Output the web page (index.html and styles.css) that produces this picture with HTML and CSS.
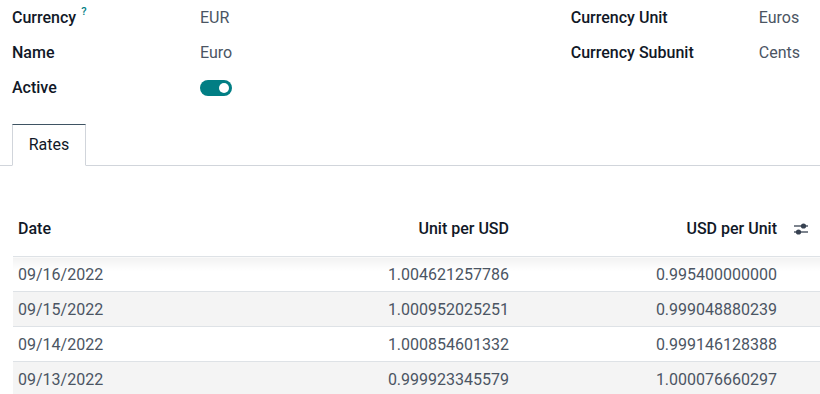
FILE: index.html
```html
<!DOCTYPE html>
<html lang="en">
<head>
  <meta charset="UTF-8" />
  <title>Currency</title>
  <link rel="stylesheet" href="styles.css">
</head>
<body>
  <div class="sheet">
    <div class="groups">
      <div class="group">
        <div class="field">
          <div class="label">Currency<sup class="help">?</sup></div>
          <div class="value">EUR</div>
        </div>
        <div class="field">
          <div class="label">Name</div>
          <div class="value">Euro</div>
        </div>
        <div class="field">
          <div class="label">Active</div>
          <div class="value"><span class="toggle"><span class="knob"></span></span></div>
        </div>
      </div>
      <div class="group group-right">
        <div class="field">
          <div class="label">Currency Unit</div>
          <div class="value">Euros</div>
        </div>
        <div class="field">
          <div class="label">Currency Subunit</div>
          <div class="value">Cents</div>
        </div>
      </div>
    </div>

    <ul class="tabs">
      <li class="tab active">Rates</li>
    </ul>

    <table class="rates">
      <thead>
        <tr>
          <th class="col-date">Date</th>
          <th class="num col-unit">Unit per USD</th>
          <th class="num col-usd">USD per Unit</th>
          <th class="col-opt">
            <svg width="16" height="14" viewBox="0 0 16 14">
              <line x1="1" y1="4" x2="15" y2="4" stroke="#374151" stroke-width="1.3"/>
              <line x1="1" y1="10" x2="15" y2="10" stroke="#374151" stroke-width="1.3"/>
              <circle cx="10.5" cy="4" r="2.6" fill="#374151"/>
              <circle cx="5.5" cy="10" r="2.6" fill="#374151"/>
            </svg>
          </th>
        </tr>
      </thead>
      <tbody>
        <tr class="first">
          <td>09/16/2022</td>
          <td class="num">1.004621257786</td>
          <td class="num">0.995400000000</td>
          <td></td>
        </tr>
        <tr>
          <td>09/15/2022</td>
          <td class="num">1.000952025251</td>
          <td class="num">0.999048880239</td>
          <td></td>
        </tr>
        <tr>
          <td>09/14/2022</td>
          <td class="num">1.000854601332</td>
          <td class="num">0.999146128388</td>
          <td></td>
        </tr>
        <tr>
          <td>09/13/2022</td>
          <td class="num">0.999923345579</td>
          <td class="num">1.000076660297</td>
          <td></td>
        </tr>
      </tbody>
    </table>
  </div>
</body>
</html>
```

FILE: styles.css
```css
body, html {
  margin: 0;
  padding: 0;
  background-color: #ffffff;
  font-family: Roboto, "Noto Sans", sans-serif;
  font-size: 16px;
  color: #374151;
}

.sheet {
  width: 820px;
}

.groups {
  display: flex;
  padding: 0 20px 0 12px;
}

.group {
  flex: 1;
  display: flex;
  flex-direction: column;
}

.group-right {
  flex: 0 0 229px;
}

.field {
  display: flex;
  align-items: center;
  height: 35px;
}

.label {
  width: 188px;
  font-weight: 500;
  color: #111827;
}

.help {
  font-size: 11px;
  color: #017e84;
  margin-left: 5px;
  vertical-align: 8px;
  line-height: 0;
}

.value {
  color: #4b5563;
}

.toggle {
  display: block;
  width: 32px;
  height: 16px;
  border-radius: 8px;
  background-color: #017e84;
  position: relative;
}

.knob {
  position: absolute;
  right: 3px;
  top: 3px;
  width: 10px;
  height: 10px;
  border-radius: 50%;
  background-color: #ffffff;
}

.tabs {
  list-style: none;
  margin: 19px 0 0 0;
  padding: 0 0 0 12px;
  display: flex;
  border-bottom: 1px solid #d1d5db;
}

.tab {
  width: 72px;
  height: 40px;
  line-height: 40px;
  text-align: center;
  color: #111827;
  margin-bottom: -1px;
}

.tab.active {
  border: 1px solid #d1d5db;
  border-top: 1px solid #3f5463;
  border-bottom: 1px solid #ffffff;
  background-color: #ffffff;
}

.rates {
  margin: 44px 0 0 13px;
  width: 807px;
  border-collapse: collapse;
}

.rates th {
  height: 36px;
  font-weight: 500;
  color: #111827;
  text-align: left;
  padding: 0 5px 10px 5px;
  border-bottom: 1px solid #dee2e6;
}

.rates td {
  height: 34px;
  padding: 0 5px;
  border-top: 1px solid #dee2e6;
  color: #4b5563;
}

.rates .num {
  text-align: right;
}

.col-date {
  width: 190px;
}

.col-usd {
  width: 258px;
}

.col-opt {
  width: 38px;
}

.rates th.col-opt {
  padding: 0 0 10px 0;
}

.col-opt svg {
  display: block;
  margin: 2px 0 0 11px;
}

.rates tbody tr:nth-child(even) td {
  background-color: #f4f4f4;
}

.rates tr.first td {
  border-top: 1px solid #e5e7eb;
  background-image: linear-gradient(#f2f2f2, #ffffff 40%);
}
```
